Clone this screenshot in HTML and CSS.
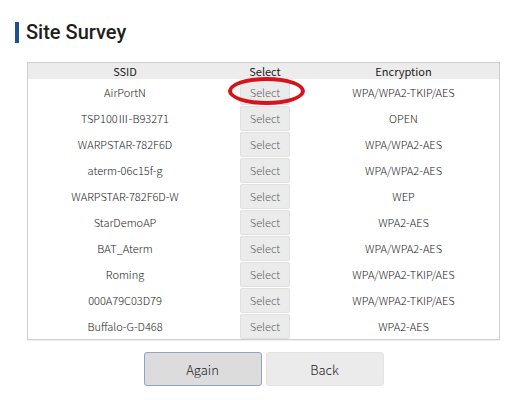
FILE: index.html
```html
<!DOCTYPE html>
<html lang="en">
<head>
  <meta charset="UTF-8">
  <title>Site Survey</title>
  <link rel="stylesheet" href="styles.css">
</head>
<body>
  <div class="page">
    <h1 class="page-title">Site Survey</h1>

    <div class="survey">
      <table class="survey-table">
        <thead>
          <tr>
            <th class="col-ssid">SSID</th>
            <th class="col-select">Select</th>
            <th class="col-enc">Encryption</th>
          </tr>
        </thead>
        <tbody>
          <tr><td>AirPortN</td><td><button class="select-btn">Select</button></td><td>WPA/WPA2-TKIP/AES</td></tr>
          <tr><td>TSP100Ⅲ-B93271</td><td><button class="select-btn">Select</button></td><td>OPEN</td></tr>
          <tr><td>WARPSTAR-782F6D</td><td><button class="select-btn">Select</button></td><td>WPA/WPA2-AES</td></tr>
          <tr><td>aterm-06c15f-g</td><td><button class="select-btn">Select</button></td><td>WPA/WPA2-AES</td></tr>
          <tr><td>WARPSTAR-782F6D-W</td><td><button class="select-btn">Select</button></td><td>WEP</td></tr>
          <tr><td>StarDemoAP</td><td><button class="select-btn">Select</button></td><td>WPA2-AES</td></tr>
          <tr><td>BAT_Aterm</td><td><button class="select-btn">Select</button></td><td>WPA/WPA2-AES</td></tr>
          <tr><td>Roming</td><td><button class="select-btn">Select</button></td><td>WPA/WPA2-TKIP/AES</td></tr>
          <tr><td>000A79C03D79</td><td><button class="select-btn">Select</button></td><td>WPA/WPA2-TKIP/AES</td></tr>
          <tr><td>Buffalo-G-D468</td><td><button class="select-btn">Select</button></td><td>WPA2-AES</td></tr>
        </tbody>
      </table>
      <!-- highlight around the first Select button -->
      <span class="highlight"></span>
    </div>

    <div class="actions">
      <button class="action-btn active">Again</button>
      <button class="action-btn">Back</button>
    </div>
  </div>
</body>
</html>
```

FILE: styles.css
```css
body {
  margin: 0;
  background: #fff;
  font-family: "Noto Sans CJK JP", "Liberation Sans", sans-serif;
  font-weight: 300;
  color: #222;
}

.page {
  padding: 22px 0 0 15px;
  width: 485px;
}

.page-title {
  margin: 0 0 19px 0;
  padding-left: 7px;
  border-left: 4px solid #1d4f91;
  font-family: Roboto, "Liberation Sans", sans-serif;
  font-size: 20px;
  font-weight: 500;
  line-height: 21px;
  color: #1e1e1e;
}

.survey {
  position: relative;
  margin-left: 12px;
  width: 473px;
}

.survey-table {
  width: 100%;
  border-collapse: collapse;
  border: 1px solid #cfcfcf;
  box-shadow: 0 1px 1px rgba(0, 0, 0, 0.06);
  font-size: 11px;
  table-layout: fixed;
}

.survey-table th {
  height: 16px;
  padding: 0;
  background: #ececec;
  font-weight: 400;
  color: #1a1a1a;
  line-height: 16px;
}

.col-ssid { width: 194px; }
.col-select { width: 86px; }

.survey-table td {
  height: 26px;
  padding: 0;
  text-align: center;
  line-height: 26px;
  color: #222;
}

.select-btn {
  display: block;
  margin: 0 auto;
  width: 50px;
  height: 25px;
  padding: 0;
  border: 1px solid #e0e0e0;
  border-radius: 2px;
  background: #ebebeb;
  color: #5e5e5e;
  font-family: inherit;
  font-weight: 300;
  font-size: 11px;
  line-height: 22px;
}

.highlight {
  position: absolute;
  left: 201px;
  top: 15px;
  width: 69px;
  height: 20px;
  border: 4.5px solid #d6131b;
  border-radius: 50%;
}

.actions {
  display: flex;
  justify-content: center;
  gap: 4px;
  margin: 12px 0 0 12px;
  width: 473px;
}

.action-btn {
  width: 118px;
  height: 34px;
  padding: 0;
  border: 1px solid #e3e3e3;
  border-radius: 3px;
  background: #ebebeb;
  color: #222;
  font-family: inherit;
  font-weight: 300;
  font-size: 13px;
}

.action-btn.active {
  background: #dcdcdc;
  border-color: #8ea4c4;
}
```
